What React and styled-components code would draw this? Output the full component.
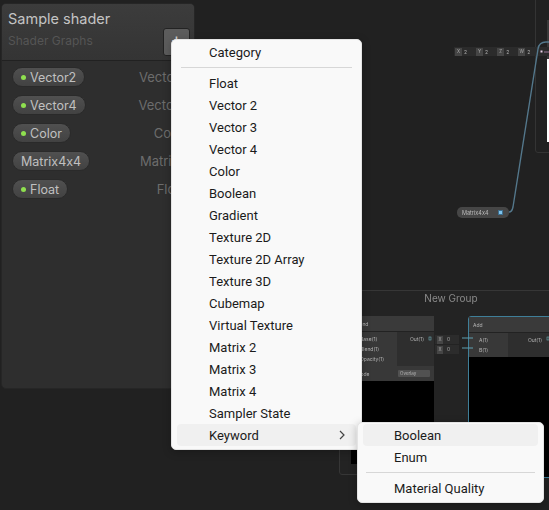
import styled, { createGlobalStyle } from "styled-components";

const GlobalStyle = createGlobalStyle`
  html, body {
    margin: 0;
    padding: 0;
    background: #212121;
  }
`;

const Page = styled.div`
  position: relative;
  width: 549px;
  height: 510px;
  overflow: hidden;
  background: #212121;
  font-family: Inter, "Noto Sans", sans-serif;
  font-feature-settings: "calt" 0;
`;

// graph canvas, everything in here sits at its own place on the canvas
const Canvas = styled.div`
  position: absolute;
  inset: 0;
  filter: blur(0.45px);
`;

const Wires = styled.svg`
  position: absolute;
  inset: 0;
`;

const GroupBox = styled.div`
  position: absolute;
  left: 339px;
  top: 290px;
  width: 300px;
  height: 185px;
  box-sizing: border-box;
  border: 1px solid #363636;
  border-radius: 3px;
  background: #232323;
`;

const GroupTitle = styled.div`
  position: absolute;
  left: 339px;
  top: 291px;
  width: 224px;
  text-align: center;
  font-size: 10px;
  line-height: 14px;
  color: #8a8a8a;
`;

const Node = styled.div`
  position: absolute;
  left: ${(p) => p.$x}px;
  top: ${(p) => p.$y}px;
  width: ${(p) => p.$w}px;
  box-sizing: border-box;
  border: ${(p) => (p.$selected ? "1px solid #3f7f99" : "0")};
  border-radius: 3px 3px 0 0;
  font-size: 5px;
  color: #b4b4b4;
`;

const NodeHeader = styled.div`
  height: 15px;
  padding: 0 4px;
  display: flex;
  align-items: center;
  background: #3a3a3a;
  border-bottom: 1px solid #222;
`;

const NodePorts = styled.div`
  display: grid;
  grid-template-columns: ${(p) => p.$cols};
  background: #2e2e2e;
`;

const PortColumn = styled.div`
  display: flex;
  flex-direction: column;
  gap: 3px;
  height: ${(p) => p.$h}px;
  box-sizing: border-box;
  padding: 4px ${(p) => (p.$end ? p.$inset : 0)}px 0 ${(p) => (p.$end ? 0 : p.$inset)}px;
  background: ${(p) => p.$bg || "transparent"};
  align-items: ${(p) => (p.$end ? "flex-end" : "flex-start")};
`;

const PortLabel = styled.span`
  line-height: 7px;
  white-space: nowrap;
`;

const ModeRow = styled.div`
  height: 15px;
  display: flex;
  align-items: center;
  justify-content: space-between;
  padding: 0 4px 0 5px;
  background: #383838;
`;

const ModeSelect = styled.div`
  width: 32px;
  height: 7px;
  box-sizing: border-box;
  line-height: 7px;
  padding: 0 2px;
  background: #515151;
  border-radius: 1px;
  font-size: 4.5px;
`;

const Preview = styled.div`
  height: ${(p) => p.$h}px;
  background: #000;
`;

const InputChip = styled.div`
  position: absolute;
  left: ${(p) => p.$x}px;
  top: ${(p) => p.$y}px;
  width: ${(p) => p.$w}px;
  height: 9px;
  display: flex;
  align-items: center;
  gap: 4px;
  padding-left: 2px;
  box-sizing: border-box;
  background: #2c2c2c;
  font-size: 5px;
  line-height: 9px;
  color: #aaa;
`;

const AxisLabel = styled.span`
  width: ${(p) => p.$w}px;
  height: 8px;
  line-height: 8px;
  text-align: center;
  background: #454545;
  font-size: 4.5px;
`;

const VectorRow = styled.div`
  position: absolute;
  left: 454px;
  top: 47px;
  width: 95px;
  height: 9px;
  display: flex;
  align-items: center;
  gap: 9px;
  padding-left: 1px;
  box-sizing: border-box;
  background: #2b2b2b;
  font-size: 5px;
  color: #aaa;
`;

const VectorCell = styled.span`
  display: flex;
  align-items: center;
  gap: 2px;
`;

const TopNode = styled.div`
  position: absolute;
  left: 535px;
  top: -4px;
  width: 30px;
  height: 157px;
  box-sizing: border-box;
  border: 1px solid #343434;
  border-radius: 3px;
`;

const TopNodeHeader = styled.div`
  position: absolute;
  left: 547px;
  top: 20px;
  width: 2px;
  height: 39px;
  background: #3a3a3a;
`;

const TopNodePreview = styled.div`
  position: absolute;
  left: 547px;
  top: 59px;
  width: 2px;
  height: 83px;
  background: #fff;
`;

const PropertyPill = styled.div`
  position: absolute;
  left: 457px;
  top: 207px;
  width: 52px;
  height: 11px;
  display: flex;
  align-items: center;
  justify-content: space-between;
  padding: 0 7px 0 5px;
  box-sizing: border-box;
  border-radius: 5px;
  background: #464646;
  font-size: 5.5px;
  color: #bbb;
`;

const PortDot = styled.span`
  width: 3px;
  height: 3px;
  background: #7ec4ee;
  outline: 1px solid #3e6e8e;
`;

// left blackboard panel
const Blackboard = styled.aside`
  position: absolute;
  left: 1px;
  top: 3px;
  width: 194px;
  height: 386px;
  box-sizing: border-box;
  border-radius: 5px;
  background: #2e2e2e;
  border: 1px solid #262626;
  display: flex;
  flex-direction: column;
  overflow: hidden;
`;

const BoardHeader = styled.header`
  height: 57px;
  flex: none;
  box-sizing: border-box;
  padding: 6px 4px 0 6px;
  background: linear-gradient(#3c3c3c, #343434);
  border-bottom: 1px solid #212121;
  display: flex;
  justify-content: space-between;
`;

const BoardTitle = styled.div`
  font-size: 14.5px;
  line-height: 18px;
  color: #c4c4c4;
`;

const BoardSubtitle = styled.div`
  margin-top: 5px;
  font-size: 12px;
  line-height: 16px;
  color: #555;
`;

const AddButton = styled.div`
  width: 27px;
  height: 28px;
  margin-top: 18px;
  box-sizing: border-box;
  border: 1px solid #232323;
  border-radius: 3px;
  background: #5c5c5c;
  color: #d0d0d0;
  font-size: 18px;
  line-height: 22px;
  text-align: center;
`;

const BoardList = styled.div`
  display: flex;
  flex-direction: column;
  gap: 8px;
  padding: 6px 7px 0 10px;
`;

const BoardRow = styled.div`
  height: 20px;
  display: flex;
  align-items: center;
  justify-content: space-between;
`;

const Pill = styled.div`
  height: 20px;
  box-sizing: border-box;
  display: flex;
  align-items: center;
  gap: 4px;
  padding: 0 8px;
  border-radius: 10px;
  border: 1px solid #2a2a2a;
  background: linear-gradient(#505050, #424242);
  font-size: 12.5px;
  color: #c0c0c0;
`;

const Dot = styled.span`
  width: 5px;
  height: 5px;
  border-radius: 50%;
  background: #8fe04f;
`;

const RowType = styled.span`
  font-size: 13px;
  color: #6c6c6c;
`;

// context menus
const Menu = styled.div`
  position: absolute;
  left: ${(p) => p.$x}px;
  top: ${(p) => p.$y}px;
  width: ${(p) => p.$w}px;
  box-sizing: border-box;
  padding: 1px 5px 3px;
  background: #f9f9f9;
  border: 1px solid #e4e4e4;
  border-radius: 5px;
  box-shadow: 0 2px 8px rgba(0, 0, 0, 0.25);
  font-family: Roboto, "Noto Sans", sans-serif;
  font-size: 13px;
  color: #1b1b1b;
`;

const MenuItem = styled.div`
  height: 22px;
  display: flex;
  align-items: center;
  justify-content: space-between;
  padding: 0 10px 0 ${(p) => p.$left}px;
  border-radius: 4px;
  background: ${(p) => (p.$active ? "#f0f0f0" : "transparent")};
`;

const MenuDivider = styled.div`
  height: 1px;
  margin: ${(p) => p.$gap}px ${(p) => p.$inset}px;
  background: #d7d7d7;
`;

const Chevron = styled.svg`
  width: 8px;
  height: 10px;
  stroke: #444;
  fill: none;
  stroke-width: 1.2;
`;

const properties = [
  { name: "Vector2", type: "Vector2", dot: true },
  { name: "Vector4", type: "Vector4", dot: true },
  { name: "Color", type: "Color", dot: true },
  { name: "Matrix4x4", type: "Matrix4", dot: false },
  { name: "Float", type: "Float", dot: true },
];

const menuItems = [
  "Float",
  "Vector 2",
  "Vector 3",
  "Vector 4",
  "Color",
  "Boolean",
  "Gradient",
  "Texture 2D",
  "Texture 2D Array",
  "Texture 3D",
  "Cubemap",
  "Virtual Texture",
  "Matrix 2",
  "Matrix 3",
  "Matrix 4",
  "Sampler State",
];

function GraphCanvas() {
  return (
    <Canvas>
      <GroupBox />
      <GroupTitle>New Group</GroupTitle>

      <TopNode />
      <TopNodeHeader />
      <TopNodePreview />
      <VectorRow>
        {["X", "Y", "Z", "W"].map((axis) => (
          <VectorCell key={axis}>
            <AxisLabel $w={7}>{axis}</AxisLabel>2
          </VectorCell>
        ))}
      </VectorRow>

      <PropertyPill>
        Matrix4x4
        <PortDot />
      </PropertyPill>

      <Node $x={351} $y={316} $w={83}>
        <NodeHeader>Blend</NodeHeader>
        <NodePorts $cols="46px 37px">
          <PortColumn $h={34} $bg="#383838" $inset={9}>
            <PortLabel>Base(1)</PortLabel>
            <PortLabel>Blend(1)</PortLabel>
            <PortLabel>Opacity(1)</PortLabel>
          </PortColumn>
          <PortColumn $h={34} $end $inset={10}>
            <PortLabel>Out(1)</PortLabel>
          </PortColumn>
        </NodePorts>
        <ModeRow>
          <span>Mode</span>
          <ModeSelect>Overlay</ModeSelect>
        </ModeRow>
        <Preview $h={83} />
      </Node>

      <InputChip $x={435} $y={335} $w={24}>
        <AxisLabel $w={6}>X</AxisLabel>0
      </InputChip>
      <InputChip $x={435} $y={345} $w={24}>
        <AxisLabel $w={6}>X</AxisLabel>0
      </InputChip>

      <Node $x={468} $y={316} $w={100} $selected>
        <NodeHeader>Add</NodeHeader>
        <NodePorts $cols="39px 59px">
          <PortColumn $h={24} $bg="#383838" $inset={10}>
            <PortLabel>A(1)</PortLabel>
            <PortLabel>B(1)</PortLabel>
          </PortColumn>
          <PortColumn $h={24} $end $inset={25}>
            <PortLabel>Out(1)</PortLabel>
          </PortColumn>
        </NodePorts>
        <Preview $h={120} />
      </Node>

      <Wires width="549" height="510" fill="none">
        <path
          d="M509 212 Q512 212 513 207 L538 49 Q539 42 546 42 L549 42"
          stroke="#54788c"
          strokeWidth="1.4"
        />
        <path d="M462 338 L473 338 M462 348 L473 348" stroke="#5f9fb0" strokeWidth="1" />
        <path d="M544 52 L549 52" stroke="#9a7a9a" strokeWidth="1" />
        <rect x="540.5" y="50.5" width="2" height="2" fill="#e8cfe8" />
        <rect x="429" y="337" width="2" height="3" stroke="#6fb0b8" strokeWidth="0.6" />
        <rect x="547" y="337" width="2" height="3" stroke="#6fb0b8" strokeWidth="0.6" />
      </Wires>
    </Canvas>
  );
}

export default function App() {
  return (
    <Page>
      <GlobalStyle />
      <GraphCanvas />

      <Blackboard>
        <BoardHeader>
          <div>
            <BoardTitle>Sample shader</BoardTitle>
            <BoardSubtitle>Shader Graphs</BoardSubtitle>
          </div>
          <AddButton>+</AddButton>
        </BoardHeader>
        <BoardList>
          {properties.map((p) => (
            <BoardRow key={p.name}>
              <Pill>
                {p.dot && <Dot />}
                {p.name}
              </Pill>
              <RowType>{p.type}</RowType>
            </BoardRow>
          ))}
        </BoardList>
      </Blackboard>

      <Menu $x={171} $y={39} $w={191}>
        <MenuItem $left={32}>Category</MenuItem>
        <MenuDivider $gap={4} $inset={4} />
        {menuItems.map((label) => (
          <MenuItem key={label} $left={32}>
            {label}
          </MenuItem>
        ))}
        <MenuItem $left={32} $active>
          Keyword
          <Chevron viewBox="0 0 8 10">
            <path d="M2 1 L6 5 L2 9" />
          </Chevron>
        </MenuItem>
      </Menu>

      <Menu $x={357} $y={422} $w={187}>
        <MenuItem $left={31} $active>Boolean</MenuItem>
        <MenuItem $left={31}>Enum</MenuItem>
        <MenuDivider $gap={4} $inset={3} />
        <MenuItem $left={31}>Material Quality</MenuItem>
      </Menu>
    </Page>
  );
}
